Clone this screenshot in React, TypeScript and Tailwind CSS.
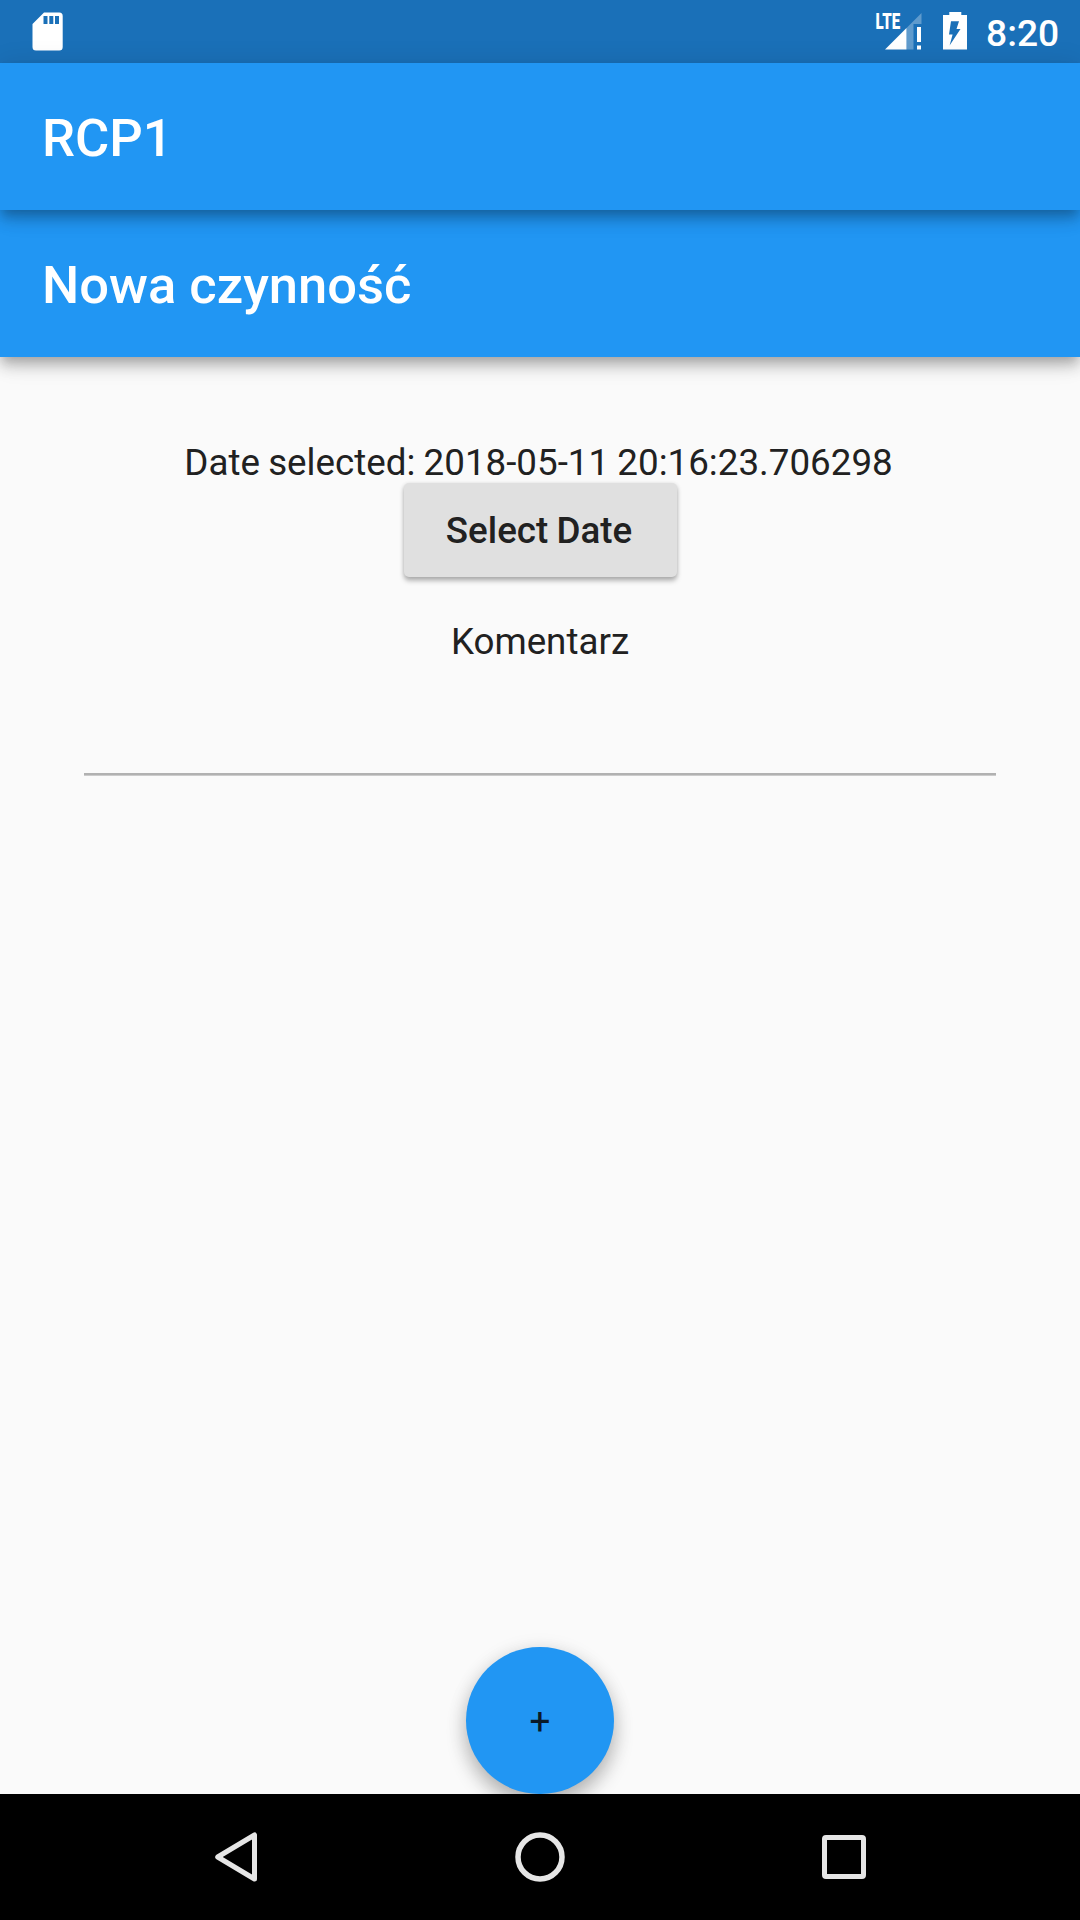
function StatusBar() {
  return (
    <div className="flex h-[63px] items-center justify-between bg-[#1a70b8] text-white">
      <svg className="ml-[32px] h-[63px] w-[32px]" viewBox="32 0 32 63" fill="currentColor">
        <path
          fillRule="evenodd"
          d="M44 12.500H59.300Q62.700 12.500 62.700 16V47Q62.700 50.500 59.300 50.500H36Q32.500 50.500 32.500 47V24Z M43.500 16V24H47.500V16Z M49.300 16V24H53.300V16Z M55 16V24H59V16Z"
        />
      </svg>
      <div className="flex items-center">
        <svg className="h-[63px] w-[100px]" viewBox="870 0 100 63" fill="currentColor">
          <text
            x="875.6"
            y="29.3"
            textLength="24.6"
            lengthAdjust="spacingAndGlyphs"
            fontFamily="Roboto"
            fontWeight="900"
            fontSize="22.8"
          >
            LTE
          </text>
          <path d="M906.500 28L921.500 13V24H913.500V49.500H906.500Z" opacity="0.3" />
          <path d="M885 49.500L906.500 28V49.500Z" />
          <path d="M917 27H921V42H917ZM917 45.500H921V49.500H917Z" />
          <path
            fillRule="evenodd"
            d="M943 15H949.300V12H961.300V15H967V49.500H943Z M951 21.300L949 34.500H952.600L949.600 45.500L960.500 29H956.500L959 21.300Z"
          />
        </svg>
        <span className="w-[110px] pt-[3px] pl-[16px] text-[37.2px] leading-[60px] font-medium">8:20</span>
      </div>
    </div>
  );
}

function AppBar({ title }: { title: string }) {
  return (
    <header className="relative flex h-[147px] items-center bg-[#2196f3] px-[42px] pt-[3px] text-[52.5px] font-medium text-white shadow-[0_5.25px_10.5px_-2.6px_rgba(0,0,0,0.2),0_10.5px_13.1px_0_rgba(0,0,0,0.14),0_2.6px_26px_0_rgba(0,0,0,0.12)]">
      <h1>{title}</h1>
    </header>
  );
}

function NavigationBar() {
  return (
    <nav className="relative h-[126px] bg-black">
      <svg
        className="block h-[126px] w-[1080px]"
        viewBox="0 0 1080 126"
        fill="none"
        stroke="#e6e6e6"
        strokeWidth="5"
        strokeLinejoin="round"
      >
        <path d="M254.500 41V85L217.700 63Z" />
        <circle cx="540" cy="63" r="22" strokeWidth="5.500" />
        <rect x="824.500" y="43.500" width="39" height="39" rx="1.500" />
      </svg>
    </nav>
  );
}

export default function App() {
  return (
    <div className="flex h-[1920px] w-[1080px] flex-col overflow-hidden bg-[#fafafa] font-[Roboto,sans-serif]">
      <StatusBar />
      <div className="relative z-20">
        <AppBar title="RCP1" />
      </div>
      <div className="relative z-10">
        <AppBar title="Nowa czynność" />
      </div>
      <main className="flex flex-1 flex-col items-center pt-[84px] text-[36.75px] leading-[42px] text-[#212121]">
        <p className="h-[42px] pr-[3px] leading-[44px] [word-spacing:-0.9px]">
          Date selected: 2018-05-11 20:16:23.706298
        </p>
        <button className="h-[94px] w-[273px] rounded-[5px] bg-[#e0e0e0] pt-[2px] pr-[2px] font-medium shadow-[0_3.5px_5px_rgba(0,0,0,0.26),0_1px_4px_rgba(0,0,0,0.12)] [word-spacing:-1px]">
          Select Date
        </button>
        <label htmlFor="comment" className="mt-[44px]">
          Komentarz
        </label>
        <input
          id="comment"
          className="mt-[20px] h-[92px] w-[912px] border-b-2 border-[#b1b1b1] bg-transparent shadow-[0_1px_0_#cbcbcb] outline-none"
        />
        <button className="mt-auto h-[147px] w-[148px] rounded-full bg-[#2196f3] pt-[2px] text-[#0a1a28] shadow-[0_11px_20px_rgba(0,0,0,0.24),0_3px_20px_rgba(0,0,0,0.1)]">
          +
        </button>
      </main>
      <NavigationBar />
    </div>
  );
}
